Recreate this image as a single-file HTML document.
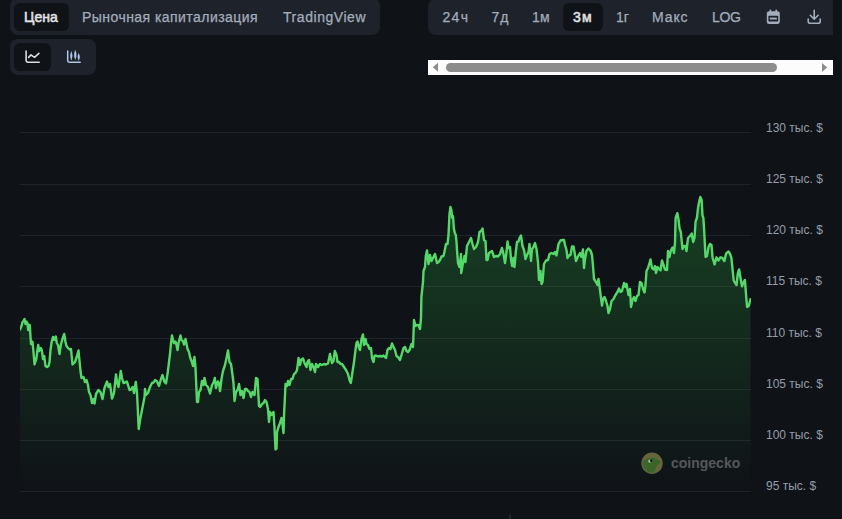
<!DOCTYPE html>
<html><head><meta charset="utf-8">
<style>
*{margin:0;padding:0;box-sizing:border-box}
html,body{width:842px;height:519px;overflow:hidden;background:#0f1217;font-family:"Liberation Sans",sans-serif}
.abs{position:absolute}
.panel{position:absolute;background:#1e232b;border-radius:8px}
.act{position:absolute;background:#0f1217;border-radius:6px}
.t{position:absolute;white-space:nowrap;font-size:14px;line-height:16px;color:#a3adbc;-webkit-text-stroke:0.25px #a3adbc}
.w{color:#e2e2e2;font-weight:normal;-webkit-text-stroke:0.55px #e2e2e2}
.ax{position:absolute;left:766px;white-space:nowrap;font-size:12px;line-height:14px;color:#959da8}
</style></head><body>
<!-- left tabs -->
<div class="panel" style="left:10px;top:-2px;width:370px;height:37px"></div>
<div class="act" style="left:14px;top:3px;width:55px;height:28px"></div>
<div class="t w" style="left:24px;top:9px;letter-spacing:0.05px">Цена</div>
<div class="t" style="left:82px;top:9px;letter-spacing:0.45px">Рыночная капитализация</div>
<div class="t" style="left:283px;top:9px;letter-spacing:0.55px">TradingView</div>
<!-- chart type -->
<div class="panel" style="left:10px;top:39px;width:86px;height:36px"></div>
<div class="act" style="left:14px;top:43px;width:37px;height:28px"></div>
<svg class="abs" style="left:0;top:0" width="100" height="80">
  <g fill="none" stroke="#d9dce0" stroke-width="1.6" stroke-linecap="round" stroke-linejoin="round">
    <path d="M26.1,51 V60.6 Q26.1,62.2 27.7,62.2 H39.2"/>
    <path d="M28.6,57.4 L31,54.9 L34.5,57.3 L38.9,53.4"/>
  </g>
  <g stroke="#aec6ec" fill="none" stroke-width="1.5" stroke-linecap="round" stroke-linejoin="round">
    <path d="M67.7,51 V60.6 Q67.7,62.2 69.3,62.2 H80.2"/>
  </g>
  <g stroke="#aec6ec" fill="none" stroke-width="0.9">
    <path d="M71.3,51.5 V60 M75.3,50.3 V59.5 M78.7,53.5 V60.4"/>
  </g>
  <g fill="#aec6ec">
    <ellipse cx="71.3" cy="55.8" rx="1.1" ry="2.9"/>
    <ellipse cx="75.3" cy="54.9" rx="1.1" ry="3.3"/>
    <ellipse cx="78.7" cy="57" rx="1.1" ry="2.4"/>
  </g>
</svg>
<!-- right toolbar -->
<div class="panel" style="left:428px;top:-1px;width:405px;height:36px;border-radius:8px 0 0 8px"></div>
<div class="act" style="left:563px;top:3px;width:40px;height:28px"></div>
<div class="t" style="left:442.5px;top:9px;letter-spacing:1.3px">24ч</div>
<div class="t" style="left:491.5px;top:9px;letter-spacing:0.9px">7д</div>
<div class="t" style="left:532px;top:9px;letter-spacing:0.2px">1м</div>
<div class="t w" style="left:573px;top:9px;letter-spacing:1.2px">3м</div>
<div class="t" style="left:616px;top:9px">1г</div>
<div class="t" style="left:652px;top:9px;letter-spacing:0.9px">Макс</div>
<div class="t" style="left:712px;top:9px;letter-spacing:-0.4px">LOG</div>
<svg class="abs" style="left:760px;top:0" width="72" height="34">
  <g fill="#a3adbc">
    <rect x="6.8" y="11.3" width="13" height="12.7" rx="2.3"/>
    <rect x="9.6" y="9.6" width="1.6" height="3"/>
    <rect x="15.4" y="9.6" width="1.6" height="3"/>
  </g>
  <rect x="8.4" y="15.8" width="9.8" height="5.8" rx="0.8" fill="#1e232b"/>
  <rect x="9.8" y="17.6" width="7" height="1.9" fill="#a3adbc"/>
  <g fill="none" stroke="#a3adbc" stroke-width="1.6" stroke-linecap="round" stroke-linejoin="round">
    <path d="M54.2,10.3 V19 M50.3,15.3 L54.2,19.2 L58.1,15.3"/>
    <path d="M48.2,19 V21.2 A2,2 0 0 0 50.2,23.2 H58.2 A2,2 0 0 0 60.2,21.2 V19"/>
  </g>
</svg>
<!-- scrollbar -->
<div class="abs" style="left:428px;top:60px;width:405px;height:15px;background:#fcfcfc"></div>
<div class="abs" style="left:446px;top:63px;width:331px;height:9px;background:#8c8c8c;border-radius:4.5px"></div>
<svg class="abs" style="left:428px;top:60px" width="405" height="15">
  <path d="M4.8,7.3 L10,2.8 V11.8 Z" fill="#8c8c8c"/>
  <path d="M399.2,7.5 L394,3.1 V11.9 Z" fill="#8c8c8c"/>
</svg>
<!-- chart -->
<svg class="abs" style="left:0;top:0" width="842" height="519">
  <defs>
    <linearGradient id="g" x1="0" y1="197" x2="0" y2="491" gradientUnits="userSpaceOnUse">
      <stop offset="0" stop-color="#33d64a" stop-opacity="0.24"/>
      <stop offset="1" stop-color="#33d64a" stop-opacity="0.0"/>
    </linearGradient>
    <clipPath id="c"><rect x="20" y="100" width="731" height="419"/></clipPath>
  </defs>
  <g stroke="#1e232b" stroke-width="1">
    <path d="M20,132.5 H751 M20,184.5 H751 M20,235.5 H751 M20,286.5 H751 M20,338.5 H751 M20,389.5 H751 M20,440.5 H751 M20,491.5 H751"/>
  </g>
  <g clip-path="url(#c)">
    <path d="M20.0,329.5 L21.5,326.0 L22.5,322.0 L23.5,321.0 L24.5,319.0 L25.5,324.0 L26.5,321.5 L27.5,323.5 L28.2,330.0 L29.0,325.0 L29.8,325.0 L30.5,337.0 L31.0,344.0 L31.5,341.0 L32.0,344.0 L32.5,342.0 L33.0,347.0 L33.5,352.0 L34.5,364.5 L36.3,359.0 L37.0,353.5 L38.2,345.0 L39.2,351.0 L40.8,348.0 L41.8,350.0 L43.0,359.0 L44.2,356.0 L45.5,366.0 L47.0,367.0 L48.5,366.0 L49.5,362.0 L50.5,350.0 L51.8,341.0 L53.0,337.0 L54.2,340.0 L55.8,336.5 L56.8,343.0 L58.0,345.0 L59.5,354.0 L61.0,344.0 L62.5,339.0 L64.2,334.0 L65.5,342.0 L66.5,346.0 L68.0,348.0 L69.5,349.5 L71.0,349.0 L72.5,364.5 L75.0,362.0 L77.0,356.0 L78.5,350.5 L80.5,371.0 L81.5,378.0 L83.5,377.0 L85.0,382.0 L86.5,380.0 L88.0,385.0 L89.0,392.0 L90.5,395.0 L92.0,403.0 L93.5,399.0 L94.5,403.5 L96.0,394.0 L98.5,390.0 L100.5,392.0 L102.5,399.0 L104.5,388.0 L107.0,381.5 L108.5,387.0 L110.0,384.0 L112.0,398.5 L114.0,393.0 L116.0,374.5 L117.2,383.0 L118.5,387.0 L120.8,371.0 L122.0,378.0 L123.5,383.0 L125.0,382.5 L126.8,381.5 L128.0,385.0 L129.5,390.0 L131.0,389.5 L132.8,387.0 L134.0,393.0 L135.8,382.0 L137.0,393.0 L137.6,405.0 L138.7,429.0 L140.4,418.0 L142.7,406.6 L144.5,397.0 L145.0,389.0 L146.0,395.0 L148.0,393.0 L150.0,387.0 L152.0,383.0 L153.5,382.5 L155.0,380.0 L157.0,381.5 L159.0,386.0 L161.0,379.0 L162.5,375.0 L164.5,382.0 L166.0,383.5 L167.8,372.0 L169.0,362.0 L170.0,354.0 L171.0,343.0 L172.0,335.5 L173.0,340.0 L174.0,343.0 L175.5,341.5 L176.5,345.0 L177.5,350.0 L178.5,343.0 L179.5,339.0 L180.5,335.5 L181.5,340.0 L183.0,341.0 L184.0,344.5 L185.5,339.0 L186.5,344.0 L187.5,349.0 L189.0,352.0 L190.0,357.0 L191.5,361.0 L193.0,366.0 L194.5,357.0 L195.5,368.0 L196.0,379.0 L197.0,402.0 L198.0,402.0 L199.0,392.0 L200.5,390.0 L202.0,381.0 L203.5,385.0 L204.5,378.0 L206.0,385.0 L208.0,387.0 L210.0,393.5 L212.0,385.0 L213.5,382.5 L214.8,378.0 L216.0,388.0 L217.8,381.5 L219.0,383.0 L220.0,391.0 L221.5,379.0 L223.0,371.0 L225.0,365.0 L226.5,358.0 L228.0,350.5 L229.5,362.0 L231.0,364.0 L232.5,375.0 L233.5,383.0 L234.5,401.0 L236.0,392.0 L237.5,390.0 L239.0,384.0 L240.5,395.0 L242.0,391.0 L243.5,398.0 L245.0,389.0 L246.5,389.0 L248.0,391.0 L249.5,392.0 L251.0,397.0 L252.5,392.0 L254.5,395.0 L256.0,378.0 L257.5,379.0 L259.0,406.0 L260.0,407.0 L262.0,404.0 L263.5,403.0 L265.0,400.0 L266.5,402.0 L268.0,409.0 L269.0,422.0 L270.0,412.0 L271.5,415.0 L273.5,412.0 L274.5,428.0 L275.5,449.5 L276.5,448.5 L277.0,432.0 L278.5,427.0 L280.0,423.0 L281.5,418.0 L282.5,424.0 L283.5,433.0 L284.0,416.0 L285.0,395.0 L285.5,384.0 L287.0,386.0 L288.0,381.0 L289.5,385.0 L291.0,379.0 L292.5,379.0 L294.0,374.0 L295.5,373.0 L297.0,370.0 L298.0,363.0 L298.5,358.0 L300.0,365.0 L301.0,360.0 L303.0,358.5 L304.5,363.0 L306.5,367.0 L307.5,362.0 L309.0,360.0 L310.5,370.0 L312.0,364.0 L313.5,367.0 L315.0,372.0 L316.0,364.0 L318.0,367.0 L320.0,364.0 L322.0,365.0 L324.0,364.0 L326.0,364.5 L328.0,363.5 L330.0,354.0 L332.0,363.0 L333.5,361.0 L334.8,351.0 L336.5,355.0 L337.5,362.0 L339.0,362.0 L340.5,364.0 L342.0,364.0 L344.0,367.0 L346.0,370.0 L348.0,374.0 L349.5,380.0 L350.8,383.0 L352.5,372.0 L354.0,362.0 L355.5,350.0 L356.5,343.0 L357.5,341.5 L359.0,348.0 L360.0,350.0 L361.5,339.0 L363.0,334.5 L364.0,345.0 L365.5,339.0 L366.5,344.0 L368.0,345.0 L369.5,349.0 L371.0,348.0 L372.0,358.0 L373.5,362.0 L374.5,356.0 L376.0,355.5 L378.0,356.5 L380.0,356.0 L382.0,356.5 L383.5,355.5 L385.0,357.0 L386.0,358.0 L387.5,350.0 L389.0,348.0 L390.5,349.0 L392.0,343.5 L393.5,347.0 L395.0,350.0 L396.5,356.0 L398.0,357.0 L400.0,360.0 L401.5,355.0 L403.5,348.0 L405.0,347.0 L406.5,351.0 L408.0,352.0 L409.5,350.0 L411.5,344.0 L413.0,347.0 L414.0,320.0 L415.5,326.0 L417.0,325.0 L418.5,325.0 L420.0,329.0 L421.0,318.0 L421.4,297.0 L423.0,282.0 L423.5,271.0 L425.0,267.0 L425.8,256.0 L427.0,250.5 L428.5,264.0 L430.0,255.0 L431.5,261.0 L433.0,258.0 L435.0,254.0 L437.0,263.0 L438.5,262.0 L440.0,260.0 L441.5,256.5 L443.5,256.0 L445.0,249.0 L446.0,244.0 L447.5,244.0 L448.5,235.0 L449.5,214.0 L450.5,207.0 L451.5,211.0 L452.2,218.0 L453.0,216.0 L453.8,228.0 L454.8,233.0 L455.8,235.0 L456.5,242.0 L457.0,250.0 L458.0,263.0 L459.5,267.0 L461.0,254.0 L461.2,273.0 L463.0,263.0 L464.5,256.0 L465.5,262.0 L467.0,246.0 L469.0,242.0 L471.0,238.0 L472.5,244.0 L474.0,249.0 L476.0,247.0 L478.0,242.0 L479.5,232.0 L481.0,231.0 L482.5,228.5 L484.0,240.0 L485.5,241.0 L486.5,260.0 L487.5,260.0 L489.0,253.0 L492.0,251.0 L494.0,257.0 L496.0,256.0 L498.0,256.5 L500.0,254.0 L502.0,248.0 L503.5,254.0 L505.0,263.0 L506.5,252.0 L507.5,241.5 L508.5,248.0 L510.0,247.0 L511.2,261.0 L512.2,266.0 L513.5,258.0 L514.5,267.0 L516.0,250.0 L517.0,242.0 L518.5,241.5 L519.5,238.0 L521.0,235.5 L522.5,246.0 L524.0,250.0 L525.5,259.0 L527.0,255.0 L528.5,252.0 L529.5,244.0 L531.0,261.0 L532.0,249.0 L533.5,247.0 L535.0,243.0 L536.5,249.0 L538.0,262.0 L539.0,280.0 L540.5,271.0 L541.5,284.0 L542.5,282.0 L544.0,264.0 L546.0,260.5 L548.0,260.0 L549.5,254.0 L551.5,253.0 L553.5,254.0 L555.0,252.0 L556.5,255.5 L558.5,244.0 L560.5,240.5 L562.5,240.0 L564.0,240.0 L565.0,245.0 L566.5,250.0 L567.5,258.0 L569.0,255.5 L570.5,255.0 L572.0,246.5 L573.5,246.5 L574.5,252.0 L576.0,261.0 L578.0,256.5 L580.0,253.0 L581.5,257.0 L583.0,249.5 L584.0,268.0 L585.0,259.0 L586.5,251.0 L588.5,248.5 L590.5,250.5 L592.0,255.0 L593.0,266.0 L594.0,279.0 L596.0,282.0 L597.5,285.0 L598.5,279.0 L600.0,290.0 L601.0,298.0 L602.0,305.5 L603.0,299.0 L604.5,297.0 L606.0,301.0 L607.5,306.0 L608.5,313.0 L610.0,309.0 L611.5,301.0 L613.5,299.0 L615.5,295.0 L617.5,292.0 L619.0,288.5 L620.5,292.0 L622.0,291.0 L624.0,283.0 L625.5,287.0 L626.5,284.0 L628.5,295.0 L630.0,289.0 L631.0,307.0 L632.5,300.0 L634.0,297.0 L635.5,301.0 L637.0,296.0 L638.5,295.0 L640.0,282.0 L641.5,283.0 L643.0,289.0 L644.5,292.5 L645.5,285.0 L646.5,271.0 L648.0,268.0 L649.5,263.0 L650.5,259.5 L652.0,268.0 L653.5,269.5 L655.0,266.0 L656.0,273.0 L657.5,267.0 L659.0,269.0 L660.5,270.5 L662.0,260.5 L663.5,265.0 L665.0,269.5 L667.0,270.0 L668.0,251.0 L669.5,257.0 L671.0,250.0 L672.5,247.5 L674.0,253.0 L675.0,243.0 L675.6,218.0 L677.3,213.2 L678.6,219.8 L679.5,228.4 L680.8,232.0 L682.5,249.0 L684.0,246.0 L685.5,246.0 L686.5,251.0 L688.0,238.0 L690.0,236.0 L691.7,233.6 L693.2,242.0 L694.5,238.0 L695.6,221.5 L696.9,218.0 L698.2,206.7 L699.0,202.4 L700.3,197.0 L701.6,200.0 L702.5,215.4 L703.4,218.0 L704.2,231.0 L705.5,257.0 L707.0,256.0 L708.5,247.0 L710.0,244.0 L711.5,245.0 L712.6,258.0 L714.6,264.4 L716.5,257.3 L718.5,260.5 L720.4,257.3 L722.3,257.9 L724.3,261.1 L726.2,253.4 L728.5,251.5 L730.1,254.0 L731.4,257.9 L732.7,270.8 L733.7,280.5 L735.2,283.1 L736.5,285.0 L737.8,273.4 L739.1,269.5 L740.4,277.3 L742.0,286.3 L743.6,282.4 L744.9,279.9 L746.2,296.6 L747.1,307.0 L748.8,305.7 L750.5,299.2 L750.5,519 L20.0,519 Z" fill="url(#g)"/>
    <path d="M20.0,329.5 L21.5,326.0 L22.5,322.0 L23.5,321.0 L24.5,319.0 L25.5,324.0 L26.5,321.5 L27.5,323.5 L28.2,330.0 L29.0,325.0 L29.8,325.0 L30.5,337.0 L31.0,344.0 L31.5,341.0 L32.0,344.0 L32.5,342.0 L33.0,347.0 L33.5,352.0 L34.5,364.5 L36.3,359.0 L37.0,353.5 L38.2,345.0 L39.2,351.0 L40.8,348.0 L41.8,350.0 L43.0,359.0 L44.2,356.0 L45.5,366.0 L47.0,367.0 L48.5,366.0 L49.5,362.0 L50.5,350.0 L51.8,341.0 L53.0,337.0 L54.2,340.0 L55.8,336.5 L56.8,343.0 L58.0,345.0 L59.5,354.0 L61.0,344.0 L62.5,339.0 L64.2,334.0 L65.5,342.0 L66.5,346.0 L68.0,348.0 L69.5,349.5 L71.0,349.0 L72.5,364.5 L75.0,362.0 L77.0,356.0 L78.5,350.5 L80.5,371.0 L81.5,378.0 L83.5,377.0 L85.0,382.0 L86.5,380.0 L88.0,385.0 L89.0,392.0 L90.5,395.0 L92.0,403.0 L93.5,399.0 L94.5,403.5 L96.0,394.0 L98.5,390.0 L100.5,392.0 L102.5,399.0 L104.5,388.0 L107.0,381.5 L108.5,387.0 L110.0,384.0 L112.0,398.5 L114.0,393.0 L116.0,374.5 L117.2,383.0 L118.5,387.0 L120.8,371.0 L122.0,378.0 L123.5,383.0 L125.0,382.5 L126.8,381.5 L128.0,385.0 L129.5,390.0 L131.0,389.5 L132.8,387.0 L134.0,393.0 L135.8,382.0 L137.0,393.0 L137.6,405.0 L138.7,429.0 L140.4,418.0 L142.7,406.6 L144.5,397.0 L145.0,389.0 L146.0,395.0 L148.0,393.0 L150.0,387.0 L152.0,383.0 L153.5,382.5 L155.0,380.0 L157.0,381.5 L159.0,386.0 L161.0,379.0 L162.5,375.0 L164.5,382.0 L166.0,383.5 L167.8,372.0 L169.0,362.0 L170.0,354.0 L171.0,343.0 L172.0,335.5 L173.0,340.0 L174.0,343.0 L175.5,341.5 L176.5,345.0 L177.5,350.0 L178.5,343.0 L179.5,339.0 L180.5,335.5 L181.5,340.0 L183.0,341.0 L184.0,344.5 L185.5,339.0 L186.5,344.0 L187.5,349.0 L189.0,352.0 L190.0,357.0 L191.5,361.0 L193.0,366.0 L194.5,357.0 L195.5,368.0 L196.0,379.0 L197.0,402.0 L198.0,402.0 L199.0,392.0 L200.5,390.0 L202.0,381.0 L203.5,385.0 L204.5,378.0 L206.0,385.0 L208.0,387.0 L210.0,393.5 L212.0,385.0 L213.5,382.5 L214.8,378.0 L216.0,388.0 L217.8,381.5 L219.0,383.0 L220.0,391.0 L221.5,379.0 L223.0,371.0 L225.0,365.0 L226.5,358.0 L228.0,350.5 L229.5,362.0 L231.0,364.0 L232.5,375.0 L233.5,383.0 L234.5,401.0 L236.0,392.0 L237.5,390.0 L239.0,384.0 L240.5,395.0 L242.0,391.0 L243.5,398.0 L245.0,389.0 L246.5,389.0 L248.0,391.0 L249.5,392.0 L251.0,397.0 L252.5,392.0 L254.5,395.0 L256.0,378.0 L257.5,379.0 L259.0,406.0 L260.0,407.0 L262.0,404.0 L263.5,403.0 L265.0,400.0 L266.5,402.0 L268.0,409.0 L269.0,422.0 L270.0,412.0 L271.5,415.0 L273.5,412.0 L274.5,428.0 L275.5,449.5 L276.5,448.5 L277.0,432.0 L278.5,427.0 L280.0,423.0 L281.5,418.0 L282.5,424.0 L283.5,433.0 L284.0,416.0 L285.0,395.0 L285.5,384.0 L287.0,386.0 L288.0,381.0 L289.5,385.0 L291.0,379.0 L292.5,379.0 L294.0,374.0 L295.5,373.0 L297.0,370.0 L298.0,363.0 L298.5,358.0 L300.0,365.0 L301.0,360.0 L303.0,358.5 L304.5,363.0 L306.5,367.0 L307.5,362.0 L309.0,360.0 L310.5,370.0 L312.0,364.0 L313.5,367.0 L315.0,372.0 L316.0,364.0 L318.0,367.0 L320.0,364.0 L322.0,365.0 L324.0,364.0 L326.0,364.5 L328.0,363.5 L330.0,354.0 L332.0,363.0 L333.5,361.0 L334.8,351.0 L336.5,355.0 L337.5,362.0 L339.0,362.0 L340.5,364.0 L342.0,364.0 L344.0,367.0 L346.0,370.0 L348.0,374.0 L349.5,380.0 L350.8,383.0 L352.5,372.0 L354.0,362.0 L355.5,350.0 L356.5,343.0 L357.5,341.5 L359.0,348.0 L360.0,350.0 L361.5,339.0 L363.0,334.5 L364.0,345.0 L365.5,339.0 L366.5,344.0 L368.0,345.0 L369.5,349.0 L371.0,348.0 L372.0,358.0 L373.5,362.0 L374.5,356.0 L376.0,355.5 L378.0,356.5 L380.0,356.0 L382.0,356.5 L383.5,355.5 L385.0,357.0 L386.0,358.0 L387.5,350.0 L389.0,348.0 L390.5,349.0 L392.0,343.5 L393.5,347.0 L395.0,350.0 L396.5,356.0 L398.0,357.0 L400.0,360.0 L401.5,355.0 L403.5,348.0 L405.0,347.0 L406.5,351.0 L408.0,352.0 L409.5,350.0 L411.5,344.0 L413.0,347.0 L414.0,320.0 L415.5,326.0 L417.0,325.0 L418.5,325.0 L420.0,329.0 L421.0,318.0 L421.4,297.0 L423.0,282.0 L423.5,271.0 L425.0,267.0 L425.8,256.0 L427.0,250.5 L428.5,264.0 L430.0,255.0 L431.5,261.0 L433.0,258.0 L435.0,254.0 L437.0,263.0 L438.5,262.0 L440.0,260.0 L441.5,256.5 L443.5,256.0 L445.0,249.0 L446.0,244.0 L447.5,244.0 L448.5,235.0 L449.5,214.0 L450.5,207.0 L451.5,211.0 L452.2,218.0 L453.0,216.0 L453.8,228.0 L454.8,233.0 L455.8,235.0 L456.5,242.0 L457.0,250.0 L458.0,263.0 L459.5,267.0 L461.0,254.0 L461.2,273.0 L463.0,263.0 L464.5,256.0 L465.5,262.0 L467.0,246.0 L469.0,242.0 L471.0,238.0 L472.5,244.0 L474.0,249.0 L476.0,247.0 L478.0,242.0 L479.5,232.0 L481.0,231.0 L482.5,228.5 L484.0,240.0 L485.5,241.0 L486.5,260.0 L487.5,260.0 L489.0,253.0 L492.0,251.0 L494.0,257.0 L496.0,256.0 L498.0,256.5 L500.0,254.0 L502.0,248.0 L503.5,254.0 L505.0,263.0 L506.5,252.0 L507.5,241.5 L508.5,248.0 L510.0,247.0 L511.2,261.0 L512.2,266.0 L513.5,258.0 L514.5,267.0 L516.0,250.0 L517.0,242.0 L518.5,241.5 L519.5,238.0 L521.0,235.5 L522.5,246.0 L524.0,250.0 L525.5,259.0 L527.0,255.0 L528.5,252.0 L529.5,244.0 L531.0,261.0 L532.0,249.0 L533.5,247.0 L535.0,243.0 L536.5,249.0 L538.0,262.0 L539.0,280.0 L540.5,271.0 L541.5,284.0 L542.5,282.0 L544.0,264.0 L546.0,260.5 L548.0,260.0 L549.5,254.0 L551.5,253.0 L553.5,254.0 L555.0,252.0 L556.5,255.5 L558.5,244.0 L560.5,240.5 L562.5,240.0 L564.0,240.0 L565.0,245.0 L566.5,250.0 L567.5,258.0 L569.0,255.5 L570.5,255.0 L572.0,246.5 L573.5,246.5 L574.5,252.0 L576.0,261.0 L578.0,256.5 L580.0,253.0 L581.5,257.0 L583.0,249.5 L584.0,268.0 L585.0,259.0 L586.5,251.0 L588.5,248.5 L590.5,250.5 L592.0,255.0 L593.0,266.0 L594.0,279.0 L596.0,282.0 L597.5,285.0 L598.5,279.0 L600.0,290.0 L601.0,298.0 L602.0,305.5 L603.0,299.0 L604.5,297.0 L606.0,301.0 L607.5,306.0 L608.5,313.0 L610.0,309.0 L611.5,301.0 L613.5,299.0 L615.5,295.0 L617.5,292.0 L619.0,288.5 L620.5,292.0 L622.0,291.0 L624.0,283.0 L625.5,287.0 L626.5,284.0 L628.5,295.0 L630.0,289.0 L631.0,307.0 L632.5,300.0 L634.0,297.0 L635.5,301.0 L637.0,296.0 L638.5,295.0 L640.0,282.0 L641.5,283.0 L643.0,289.0 L644.5,292.5 L645.5,285.0 L646.5,271.0 L648.0,268.0 L649.5,263.0 L650.5,259.5 L652.0,268.0 L653.5,269.5 L655.0,266.0 L656.0,273.0 L657.5,267.0 L659.0,269.0 L660.5,270.5 L662.0,260.5 L663.5,265.0 L665.0,269.5 L667.0,270.0 L668.0,251.0 L669.5,257.0 L671.0,250.0 L672.5,247.5 L674.0,253.0 L675.0,243.0 L675.6,218.0 L677.3,213.2 L678.6,219.8 L679.5,228.4 L680.8,232.0 L682.5,249.0 L684.0,246.0 L685.5,246.0 L686.5,251.0 L688.0,238.0 L690.0,236.0 L691.7,233.6 L693.2,242.0 L694.5,238.0 L695.6,221.5 L696.9,218.0 L698.2,206.7 L699.0,202.4 L700.3,197.0 L701.6,200.0 L702.5,215.4 L703.4,218.0 L704.2,231.0 L705.5,257.0 L707.0,256.0 L708.5,247.0 L710.0,244.0 L711.5,245.0 L712.6,258.0 L714.6,264.4 L716.5,257.3 L718.5,260.5 L720.4,257.3 L722.3,257.9 L724.3,261.1 L726.2,253.4 L728.5,251.5 L730.1,254.0 L731.4,257.9 L732.7,270.8 L733.7,280.5 L735.2,283.1 L736.5,285.0 L737.8,273.4 L739.1,269.5 L740.4,277.3 L742.0,286.3 L743.6,282.4 L744.9,279.9 L746.2,296.6 L747.1,307.0 L748.8,305.7 L750.5,299.2" fill="none" stroke="#55d769" stroke-width="2.4" stroke-linejoin="round" stroke-linecap="round"/>
  </g>
  <rect x="509" y="514" width="2" height="5" fill="#1f242c"/>
</svg>
<div class="ax" style="top:121px">130 тыс. $</div>
<div class="ax" style="top:172px">125 тыс. $</div>
<div class="ax" style="top:223px">120 тыс. $</div>
<div class="ax" style="top:274px">115 тыс. $</div>
<div class="ax" style="top:326px">110 тыс. $</div>
<div class="ax" style="top:377px">105 тыс. $</div>
<div class="ax" style="top:428px">100 тыс. $</div>
<div class="ax" style="top:479px">95 тыс. $</div>
<!-- watermark -->
<svg class="abs" style="left:640px;top:451px" width="26" height="26">
  <defs><clipPath id="cc"><circle cx="12" cy="12.3" r="9.4"/></clipPath></defs>
  <circle cx="12" cy="12.3" r="10.7" fill="#67653e"/>
  <path clip-path="url(#cc)" d="M5.5,9 C6.5,7.2 9,6.8 12,6.8 C15,6.9 18,8.5 20.3,10.6 C20.4,12 19,13.2 17.5,14.6 C15.6,17 14.6,20 14.2,23.5 L0,23.5 L0,9 Z" fill="#3a6629"/>
  <circle cx="9.8" cy="10.1" r="1.6" fill="#b9bcbc"/>
  <circle cx="11.1" cy="9.8" r="1.2" fill="#111"/>
</svg>
<div class="abs" style="left:671px;top:455px;font-size:14px;line-height:16px;font-weight:bold;color:#55585b;white-space:nowrap">coingecko</div>
</body></html>
